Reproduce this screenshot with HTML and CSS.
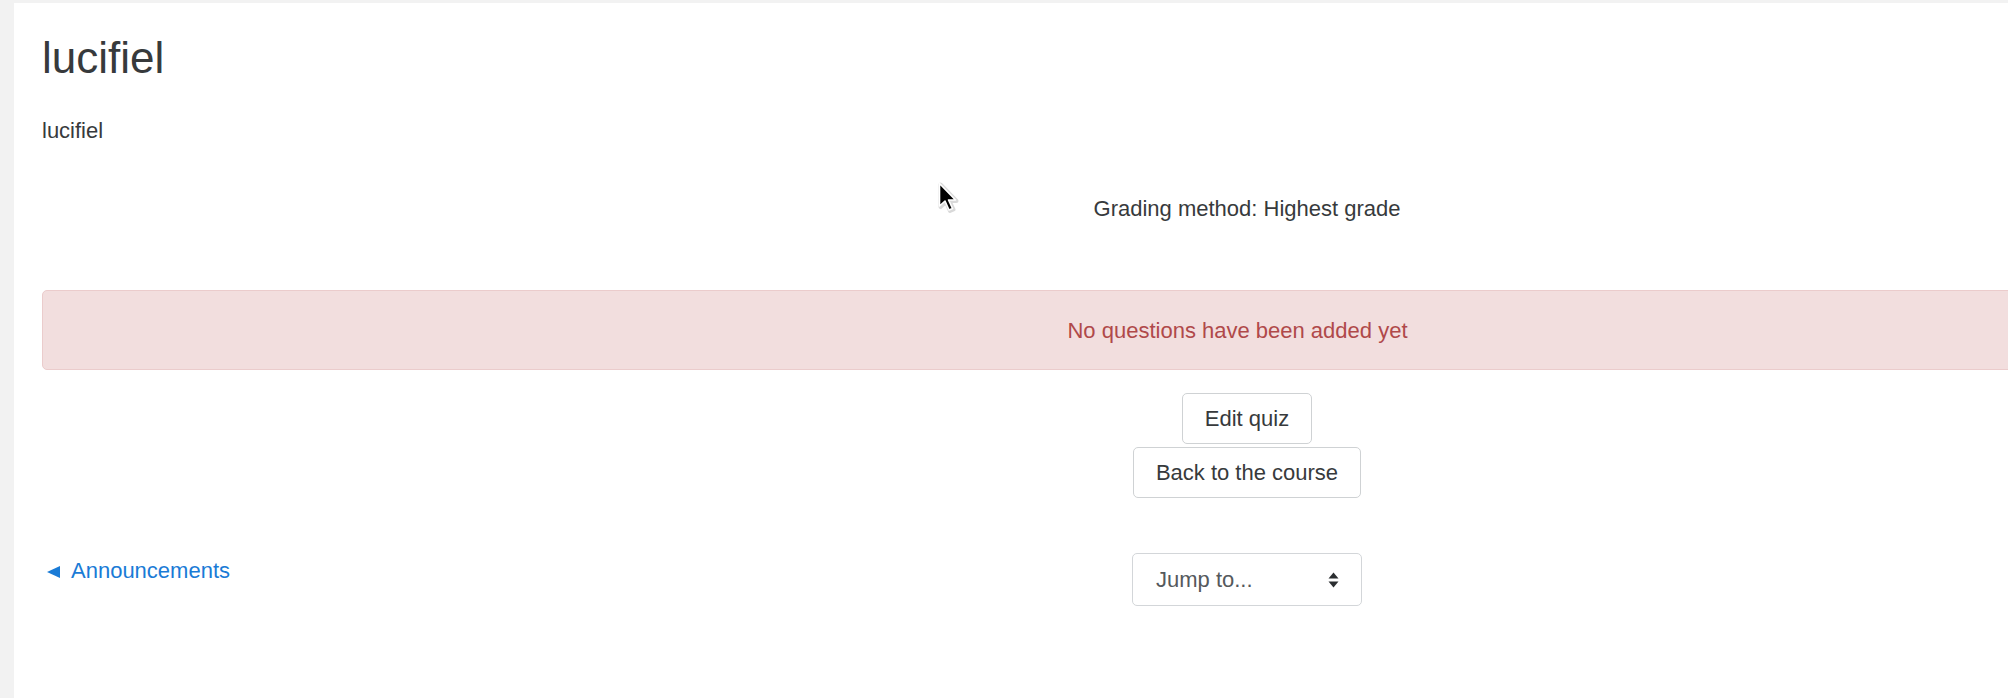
FILE: index.html
```html
<!DOCTYPE html>
<html lang="en">
<head>
<meta charset="utf-8">
<title>lucifiel</title>
<link rel="stylesheet" href="styles.css">
</head>
<body>
<div class="page">
  <div class="card">
    <h2 class="title">lucifiel</h2>
    <p class="intro">lucifiel</p>
    <p class="grading">Grading method: Highest grade</p>
    <div class="alert">No questions have been added yet</div>
    <div class="actions">
      <button class="btn" type="button">Edit quiz</button>
      <button class="btn" type="button">Back to the course</button>
    </div>
    <div class="activity-nav">
      <div class="nav-prev">
        <a href="#" class="prev-link"><span class="tri"></span>Announcements</a>
      </div>
      <div class="nav-jump">
        <div class="select">
          <span>Jump to...</span>
          <svg class="select-arrows" width="11" height="16" viewBox="0 0 11 16" aria-hidden="true">
            <polygon points="0.5,6.5 5.5,0.5 10.5,6.5" fill="#2b2e30"/>
            <polygon points="0.5,9.5 10.5,9.5 5.5,15.5" fill="#2b2e30"/>
          </svg>
        </div>
      </div>
      <div class="nav-next"></div>
    </div>
  </div>
  <svg class="cursor" width="22" height="33" viewBox="0 0 22 33" aria-hidden="true">
    <path d="M2.5 2.5 L2.5 25 L8 20 L12 29 L15.5 27.5 L11.5 19 L18.5 19 Z" fill="none" stroke="rgba(0,0,0,0.15)" stroke-width="4" stroke-linejoin="round"/>
    <path d="M1.5 1.5 L1.5 24 L7 19 L11 28 L14.5 26.5 L10.5 18 L17.5 18 Z" fill="#000" stroke="#fff" stroke-width="1.6" stroke-linejoin="round"/>
  </svg>
</div>
</body>
</html>
```

FILE: styles.css
```css
html, body {
  margin: 0;
  padding: 0;
  height: 100%;
  overflow: hidden;
  background: #f2f2f2;
}

body {
  font-family: "Liberation Sans", Arial, sans-serif;
  font-size: 22px;
  color: #373a3c;
}

.page {
  position: relative;
  height: 698px;
  box-sizing: border-box;
  padding: 3px 0 0 14px;
}

.card {
  width: 2466px;
  height: 695px;
  box-sizing: border-box;
  padding: 28px;
  background: #fff;
}

.title {
  margin: 0 0 30px;
  font-size: 44px;
  line-height: 53px;
  font-weight: 400;
}

.intro {
  margin: 0;
  line-height: 33px;
}

.grading {
  margin: 45px 0 0;
  line-height: 33px;
  text-align: center;
}

.alert {
  margin-top: 65px;
  padding: 23px 48px 22px 29px;
  background: #f2dede;
  border: 1px solid #ebcccc;
  border-radius: 5px;
  color: #b0494a;
  line-height: 33px;
  text-align: center;
}

.actions {
  margin-top: 23px;
  display: flex;
  flex-direction: column;
  align-items: center;
  gap: 3px;
}

.btn {
  font-family: inherit;
  font-size: 22px;
  line-height: 33px;
  padding: 8px 22px;
  border: 1px solid #cfd2d4;
  border-radius: 5px;
  background: #fff;
  color: #373a3c;
}

.activity-nav {
  margin-top: 55px;
  display: grid;
  grid-template-columns: 1fr 1fr 1fr;
  align-items: start;
}

.nav-prev {
  padding-top: 1px;
}

.prev-link {
  color: #1a7bd6;
  text-decoration: none;
  line-height: 33px;
}

.tri {
  display: inline-block;
  width: 0;
  height: 0;
  border-top: 6px solid transparent;
  border-bottom: 6px solid transparent;
  border-right: 13px solid #1a7bd6;
  margin: 0 11px 0 5px;
}

.nav-jump {
  display: flex;
  justify-content: center;
}

.select {
  width: 230px;
  height: 53px;
  box-sizing: border-box;
  border: 1px solid #d3d6d9;
  border-radius: 5px;
  padding: 0 22px 0 23px;
  display: flex;
  align-items: center;
  justify-content: space-between;
  color: #55595c;
  line-height: 33px;
}

.cursor {
  position: absolute;
  left: 938px;
  top: 182px;
}
```
